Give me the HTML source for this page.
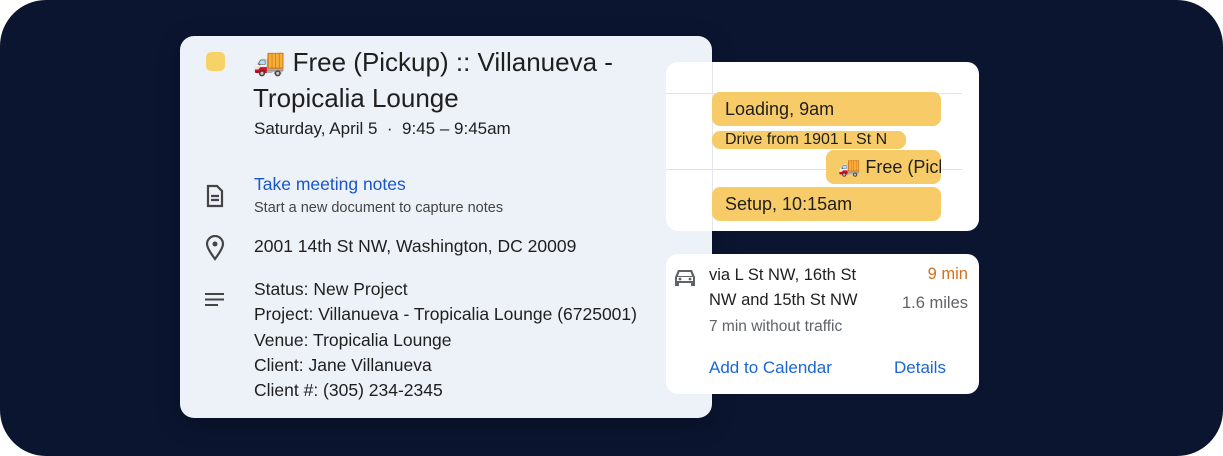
<!DOCTYPE html>
<html><head><style>
body{margin:0;width:1223px;height:456px;background:#fff;overflow:hidden;font-family:"Liberation Sans",sans-serif;}
.bg{position:absolute;left:0;top:0;width:1223px;height:456px;background:#0b1530;border-radius:46px;}
.card{position:absolute;left:180px;top:36px;width:532px;height:382px;background:#edf1f8;border-radius:14px;box-shadow:0 6px 24px rgba(0,0,0,.25);}
.t{position:absolute;color:#1f1f1f;white-space:nowrap;}
.cal{position:absolute;left:666px;top:62px;width:313px;height:169px;background:#fff;border-radius:12px;overflow:hidden;}
.ev{position:absolute;background:#f7cb67;border-radius:8px;color:#1f1f1f;white-space:nowrap;overflow:hidden;padding-left:13px;box-sizing:border-box;}
.map{position:absolute;left:666px;top:254px;width:313px;height:140px;background:#fff;border-radius:12px;}
</style></head><body>
<div class="bg"></div>
<div class="card">
 <div style="position:absolute;left:26px;top:16px;width:19px;height:19px;border-radius:5px;background:#f6d267"></div>
 <div class="t" style="left:73px;top:8px;font-size:26px;line-height:36px;">🚚 Free (Pickup) :: Villanueva -<br>Tropicalia Lounge</div>
 <div class="t" style="left:74px;top:83px;font-size:17px;">Saturday, April 5 &nbsp;·&nbsp; 9:45 – 9:45am</div>
 <svg style="position:absolute;left:25px;top:148px" width="20" height="24" viewBox="0 0 20 24"><path d="M3 2h9l5 5v15H3z M6 12h8 M6 16h8" fill="none" stroke="#444" stroke-width="2.2"/></svg>
 <div class="t" style="left:74px;top:138px;font-size:17.5px;color:#1a56c8;">Take meeting notes</div>
 <div class="t" style="left:74px;top:164px;font-size:14.5px;color:#444;">Start a new document to capture notes</div>
 <svg style="position:absolute;left:25px;top:199px" width="20" height="26" viewBox="0 0 20 26"><path d="M10 24C4 16 2 12 2 9a8 8 0 0 1 16 0c0 3-2 7-8 15z" fill="none" stroke="#444" stroke-width="2.2"/><circle cx="10" cy="9" r="2.5" fill="#444"/></svg>
 <div class="t" style="left:74px;top:200px;font-size:17.5px;">2001 14th St NW, Washington, DC 20009</div>
 <svg style="position:absolute;left:25px;top:257px" width="20" height="14"><path d="M0 1h19M0 6.5h19M0 12h13" stroke="#444" stroke-width="2"/></svg>
 <div class="t" style="left:74px;top:241px;font-size:17.5px;line-height:25.3px;">Status: New Project<br>Project: Villanueva - Tropicalia Lounge (6725001)<br>Venue: Tropicalia Lounge<br>Client: Jane Villanueva<br>Client #: (305) 234-2345</div>
</div>
<div class="cal">
 <div style="position:absolute;left:0;top:31px;width:296px;height:1px;background:#dde1e8"></div>
 <div style="position:absolute;left:0;top:107px;width:296px;height:1px;background:#dde1e8"></div>
 <div style="position:absolute;left:46px;top:0;width:1px;height:169px;background:#e3e6ec"></div>
 <div class="ev" style="left:46px;top:30px;width:229px;height:34px;font-size:18px;line-height:34px;padding-left:13px">Loading, 9am</div>
 <div class="ev" style="left:46px;top:69px;width:194px;height:18px;font-size:16px;line-height:18px;padding-left:13px">Drive from 1901 L St N</div>
 <div class="ev" style="left:160px;top:88px;width:115px;height:34px;font-size:18px;line-height:34px;padding-left:12px">🚚 Free (Pickup)</div>
 <div class="ev" style="left:46px;top:125px;width:229px;height:34px;font-size:18px;line-height:34px;padding-left:13px">Setup, 10:15am</div>
</div>
<div class="map">
 <svg style="position:absolute;left:8px;top:14px" width="22" height="20" viewBox="0 0 22 20"><path d="M4 2h14l3 7v9h-4v-3H5v3H1V9z" fill="#5f6368"/><rect x="3" y="9" width="16" height="4" fill="#fff"/><circle cx="6" cy="11" r="1.4" fill="#5f6368"/><circle cx="16" cy="11" r="1.4" fill="#5f6368"/><path d="M5.5 4h11l1.5 4H4z" fill="#fff"/></svg>
 <div class="t" style="left:43px;top:9px;font-size:16.5px;line-height:24.5px;">via L St NW, 16th St<br>NW and 15th St NW</div>
 <div class="t" style="left:43px;top:64px;font-size:15.5px;color:#5f6368;">7 min without traffic</div>
 <div class="t" style="right:11px;top:11px;font-size:16.5px;color:#d56e1d;">9 min</div>
 <div class="t" style="right:11px;top:40px;font-size:16.5px;color:#5f6368;">1.6 miles</div>
 <div class="t" style="left:43px;top:104px;font-size:17px;color:#1a66d2;">Add to Calendar</div>
 <div class="t" style="left:228px;top:104px;font-size:17px;color:#1a66d2;">Details</div>
</div>
</body></html>
